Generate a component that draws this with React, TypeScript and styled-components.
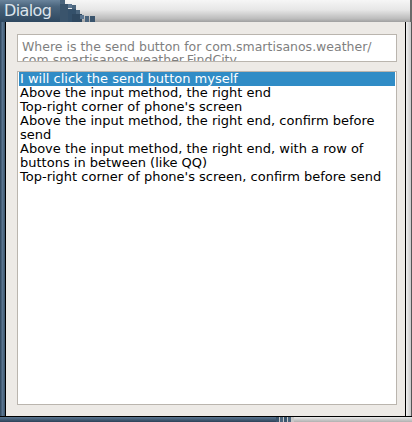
import React, { FC } from "react";
import styled, { createGlobalStyle } from "styled-components";

// Global

const GlobalStyle = createGlobalStyle`
    html, body {
        margin: 0;
        padding: 0;
        background: #ffffff;
    }
    body {
        font-family: "DejaVu Sans", "Liberation Sans", sans-serif;
    }
`

// Window frame

const Window = styled.div`
    width: 412px;
    height: 422px;
    display: flex;
    flex-direction: column;
    overflow: hidden;
`

const TitleBar = styled.div`
    height: 22px;
    display: flex;
    flex-shrink: 0;
`

const TitleTab = styled.div`
    width: 60px;
    background: linear-gradient(#6a849c 0%, #4a647c 30%, #2f4860 100%);
    color: #dce4ec;
    font-size: 16px;
    letter-spacing: -0.6px;
    line-height: 22px;
    padding-left: 4px;
    box-sizing: border-box;
    white-space: nowrap;
`

const TitleFill = styled.div`
    flex: 1;
    background: linear-gradient(#f6f6f6 0%, #e6e6e6 45%, #bcbcbc 85%, #a0a0a0 100%);
    border-right: 2px solid #6a6a6a;
`

const Middle = styled.div`
    flex: 1;
    display: flex;
    min-height: 0;
`

const SideLeft = styled.div`
    width: 5px;
    background: linear-gradient(90deg, #2c4258, #5a7590 50%, #3a546c);
    border-right: 1px solid #000;
`

const SideRight = styled.div`
    width: 5px;
    background: linear-gradient(90deg, #f0f0f0, #c8c8c8);
    border-left: 1px solid #000;
    border-right: 1px solid #555;
`

const BottomBar = styled.div`
    height: 5px;
    display: flex;
    flex-shrink: 0;
    border-top: 1px solid #000;
`

const BottomBlue = styled.div`
    width: 276px;
    background: linear-gradient(#5a7590, #2c4258);
`

const BottomGray = styled.div`
    flex: 1;
    background: linear-gradient(#e8e8e8, #b0b0b0);
`

// Content

const Content = styled.div`
    flex: 1;
    background: #edeae6;
    padding: 12px 8px 11px 11px;
    display: flex;
    flex-direction: column;
    gap: 9px;
    min-width: 0;
`

const Input = styled.div`
    height: 28px;
    box-sizing: border-box;
    background: #ffffff;
    border: 1px solid #bab5ae;
    padding: 5px 4px 0;
    color: #7f7f7f;
    font-size: 12.5px;
    line-height: 13px;
    overflow: hidden;
    flex-shrink: 0;
`

const List = styled.div`
    flex: 1;
    background: #ffffff;
    border: 1px solid #bab5ae;
    padding: 0 1px;
`

const Item = styled.div<{ $selected?: boolean }>`
    font-size: 13px;
    line-height: 14px;
    padding: 0 1px;
    color: ${p => p.$selected ? "#ffffff" : "#000000"};
    background: ${p => p.$selected ? "#308cc6" : "transparent"};
`

const options = [
    "I will click the send button myself",
    "Above the input method, the right end",
    "Top-right corner of phone's screen",
    "Above the input method, the right end, confirm before send",
    "Above the input method, the right end, with a row of buttons in between (like QQ)",
    "Top-right corner of phone's screen, confirm before send",
]

const Steps: FC = () => (
    <svg width="38" height="22" viewBox="0 0 38 22" style={{ display: "block", flexShrink: 0 }}>
        <defs>
            <linearGradient id="g" x1="0" y1="0" x2="0" y2="1">
                <stop offset="0" stopColor="#f6f6f6" />
                <stop offset="0.45" stopColor="#e6e6e6" />
                <stop offset="0.85" stopColor="#bcbcbc" />
                <stop offset="1" stopColor="#a0a0a0" />
            </linearGradient>
        </defs>
        <rect width="38" height="22" fill="url(#g)" />
        <rect x="0" y="0" width="2" height="22" fill="#2f4860" />
        <rect x="0" y="0" width="5" height="4" fill="#4a647c" />
        <rect x="0" y="4" width="8" height="18" fill="#3a546c" />
        <rect x="8" y="4" width="4" height="4" fill="#5a7590" />
        <rect x="12" y="5" width="4" height="4" fill="#4a647c" />
        <rect x="8" y="9" width="8" height="13" fill="#34506a" />
        <rect x="16" y="10" width="4" height="4" fill="#4a647c" />
        <rect x="12" y="14" width="10" height="8" fill="#2f4860" />
        <rect x="20" y="15" width="4" height="4" fill="#5a7590" />
        <rect x="25" y="16" width="4" height="6" fill="#4a647c" />
        <rect x="30" y="16" width="5" height="6" fill="#3a546c" />
    </svg>
)

const BottomSteps: FC = () => (
    <svg width="18" height="5" viewBox="0 0 18 5" style={{ display: "block", flexShrink: 0 }}>
        <rect width="18" height="5" fill="#c8c8c8" />
        <rect x="0" y="0" width="3" height="5" fill="#3a546c" />
        <rect x="4" y="0" width="3" height="5" fill="#4a647c" />
        <rect x="8" y="0" width="3" height="5" fill="#3a546c" />
        <rect x="12" y="0" width="3" height="5" fill="#4a647c" />
    </svg>
)

export default function App() {
    return (
        <>
            <GlobalStyle />
            <Window>
                <TitleBar>
                    <TitleTab>Dialog</TitleTab>
                    <Steps />
                    <TitleFill />
                </TitleBar>
                <Middle>
                    <SideLeft />
                    <Content>
                        <Input>
                            Where is the send button for com.smartisanos.weather/
                            com.smartisanos.weather.FindCity
                        </Input>
                        <List>
                            {options.map((o, i) => (
                                <Item key={i} $selected={i === 0}>{o}</Item>
                            ))}
                        </List>
                    </Content>
                    <SideRight />
                </Middle>
                <BottomBar>
                    <BottomBlue />
                    <BottomSteps />
                    <BottomGray />
                </BottomBar>
            </Window>
        </>
    )
}
